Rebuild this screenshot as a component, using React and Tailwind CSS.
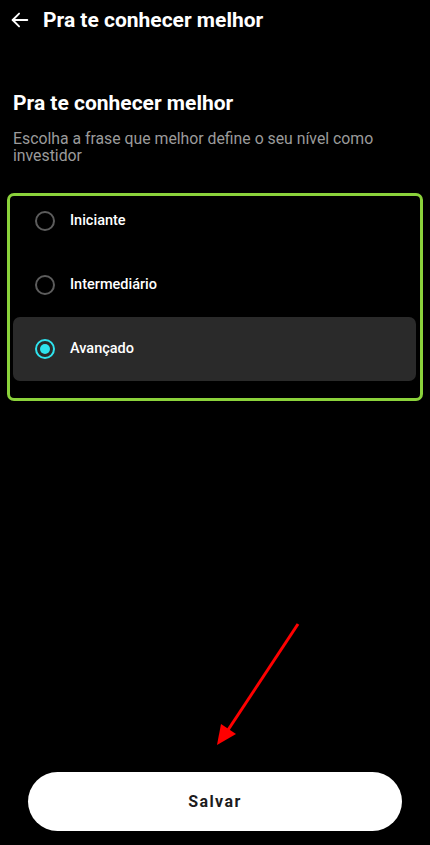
import React, { useState } from 'react';

const options = ['Iniciante', 'Intermediário', 'Avançado'];

// Radio simples no estilo do app
const Radio = ({ checked }) => (
  <div
    className={`h-5 w-5 rounded-full border-2 flex items-center justify-center ${
      checked ? 'border-[#2ee3ee]' : 'border-[#5c5c5c]'
    }`}
  >
    {checked && <div className="h-[10px] w-[10px] rounded-full bg-[#2ee3ee]" />}
  </div>
);

export default function App() {
  const [selected, setSelected] = useState('Avançado');

  return (
    <div className="relative h-[845px] w-[430px] overflow-hidden bg-black text-white flex flex-col font-['Roboto',sans-serif]">
      {/* Header */}
      <div className="flex items-center h-[40px] pl-[9px]">
        <svg width="22" height="22" viewBox="0 0 24 24" fill="none" stroke="white" strokeWidth="2" strokeLinecap="round" strokeLinejoin="round">
          <path d="M20 12H4" />
          <path d="M11 5l-7 7 7 7" />
        </svg>
        <span className="ml-[12px] text-[21px] font-bold leading-none">Pra te conhecer melhor</span>
      </div>

      {/* Título e descrição */}
      <div className="px-[13px] mt-[50px]">
        <h1 className="text-[21px] font-bold leading-[26px]">Pra te conhecer melhor</h1>
        <p className="mt-[14px] text-[15.8px] leading-[17px] text-[#9b9b9b]">
          Escolha a frase que melhor define o seu nível como investidor
        </p>
      </div>

      {/* Opções */}
      <div className="mx-[7px] mt-[29px] h-[208px] overflow-hidden rounded-[7px] border-[3px] border-[#8bd23b] px-[3px]">
        <div className="-mt-[7px] flex flex-col">
          {options.map((opt) => {
            const checked = selected === opt;
            return (
              <button
                key={opt}
                onClick={() => setSelected(opt)}
                className={`flex h-16 w-[403px] items-center rounded-[7px] pl-[22px] text-left ${
                  checked ? 'bg-[#2a2a2a]' : ''
                }`}
              >
                <Radio checked={checked} />
                <span className="ml-[15px] text-[14.5px] font-medium">{opt}</span>
              </button>
            );
          })}
        </div>
      </div>

      <div className="flex-1" />

      {/* Botão salvar */}
      <div className="px-[28px] pb-[14px]">
        <button className="h-[59px] w-full rounded-full bg-white text-[16px] font-bold tracking-[1.4px] text-[#1c1c1c]">
          Salvar
        </button>
      </div>

      {/* Seta de anotação */}
      <svg className="absolute left-0 top-0 pointer-events-none" width="430" height="845">
        <line x1="298" y1="624" x2="228" y2="730" stroke="#ff0000" strokeWidth="3" />
        <polygon points="217,745 221,724 236,734" fill="#ff0000" />
      </svg>
    </div>
  );
}
